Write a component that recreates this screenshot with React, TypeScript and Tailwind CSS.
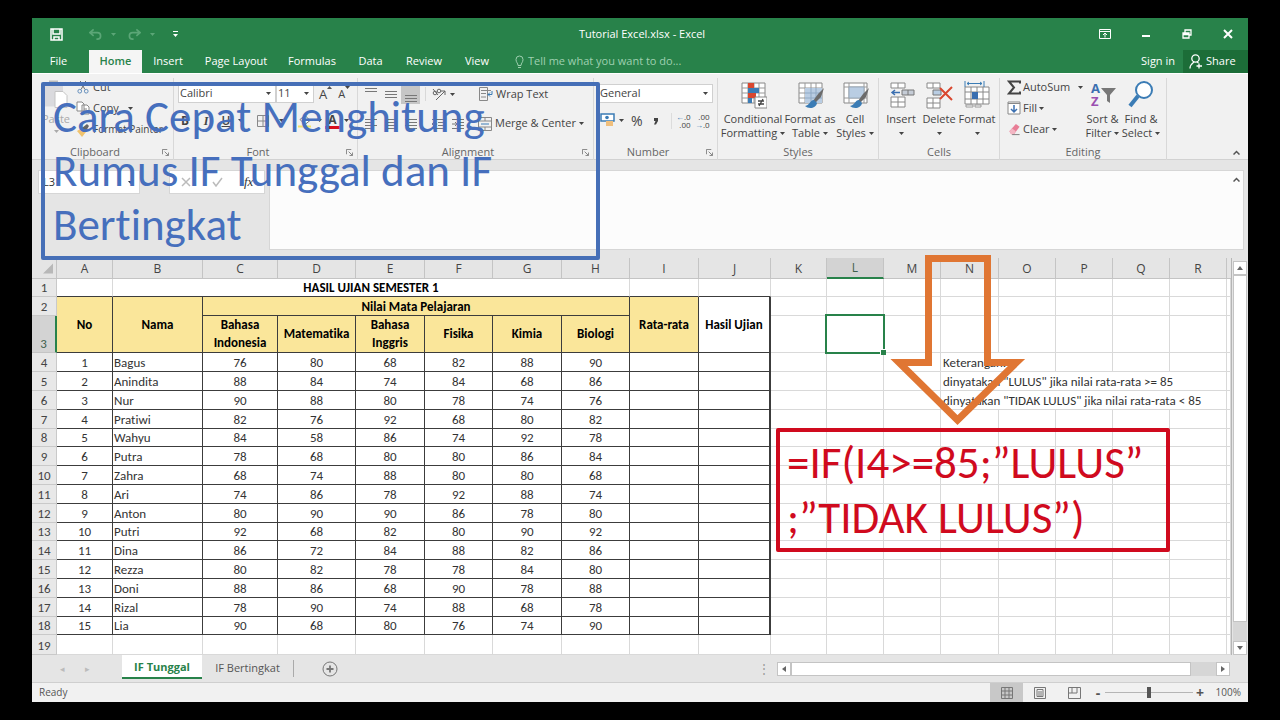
import React, { FC, ReactNode } from "react";
import { clsx } from "clsx";

const ribbonTabs = [
  { label: "File", width: "w-[57px]" },
  { label: "Home", width: "w-[53px]", active: true },
  { label: "Insert", width: "w-[52px]" },
  { label: "Page Layout", width: "w-[84px]" },
  { label: "Formulas", width: "w-[68px]" },
  { label: "Data", width: "w-[49px]" },
  { label: "Review", width: "w-[58px]" },
  { label: "View", width: "w-[48px]" },
];

const columns = [
  { name: "A", width: "w-[56px]" },
  { name: "B", width: "w-[90px]" },
  { name: "C", width: "w-[75px]" },
  { name: "D", width: "w-[78px]" },
  { name: "E", width: "w-[69px]" },
  { name: "F", width: "w-[68px]" },
  { name: "G", width: "w-[69px]" },
  { name: "H", width: "w-[68px]" },
  { name: "I", width: "w-[69px]" },
  { name: "J", width: "w-[72px]" },
  { name: "K", width: "w-[56px]" },
  { name: "L", width: "w-[57px]" },
  { name: "M", width: "w-[57px]" },
  { name: "N", width: "w-[58px]" },
  { name: "O", width: "w-[57px]" },
  { name: "P", width: "w-[57px]" },
  { name: "Q", width: "w-[57px]" },
  { name: "R", width: "w-[57px]" },
];

const students: [string, number[]][] = [
  ["Bagus", [76, 80, 68, 82, 88, 90]],
  ["Anindita", [88, 84, 74, 84, 68, 86]],
  ["Nur", [90, 88, 80, 78, 74, 76]],
  ["Pratiwi", [82, 76, 92, 68, 80, 82]],
  ["Wahyu", [84, 58, 86, 74, 92, 78]],
  ["Putra", [78, 68, 80, 80, 86, 84]],
  ["Zahra", [68, 74, 88, 80, 80, 68]],
  ["Ari", [74, 86, 78, 92, 88, 74]],
  ["Anton", [80, 90, 90, 86, 78, 80]],
  ["Putri", [92, 68, 82, 80, 90, 92]],
  ["Dina", [86, 72, 84, 88, 82, 86]],
  ["Rezza", [80, 82, 78, 78, 84, 80]],
  ["Doni", [88, 86, 68, 90, 78, 88]],
  ["Rizal", [78, 90, 74, 88, 68, 78]],
  ["Lia", [90, 68, 80, 76, 74, 90]],
];

const styles = {
  head: "border-r border-b border-[#3c3c3c] bg-[#fae69a] font-bold text-black",
  cell: "border-r border-b border-[#3c3c3c]",
  empty: "border-r border-b border-[#d9d9d9]",
};

const Caret: FC<{ className?: string }> = ({ className }) => (
  <svg viewBox="0 0 5 3" className={clsx("h-[3px] w-[5px] shrink-0", className)}>
    <path d="M0 0h5L2.5 3z" fill="currentColor" />
  </svg>
);

const Launcher = () => (
  <svg viewBox="0 0 8 8" className="h-[7px] w-[7px]" fill="none" stroke="#777">
    <path d="M.5 6V.5H6M3 3l4 4M7.500 4v3.500H4" />
  </svg>
);

type GroupProps = {
  label: string;
  width: string;
  launcher?: boolean;
  children: ReactNode;
};

const Group: FC<GroupProps> = ({ label, width, launcher, children }) => (
  <section className={clsx("flex shrink-0 flex-col", width)}>
    <div className="mt-1 flex flex-1 flex-col border-r border-[#d8d8d8] pb-1">
      <div className="h-[67px]">{children}</div>
      <div className="flex h-[14px] items-center px-1 text-[#666]">
        <span className={clsx("flex-1 text-center", launcher && "pr-2")}>{label}</span>
        {launcher && (
          <button aria-label={`${label} settings`}>
            <Launcher />
          </button>
        )}
      </div>
    </div>
  </section>
);

type BigButtonProps = {
  lines: string[];
  width: string;
  caret?: "inline" | "below";
  children: ReactNode;
};

const BigButton: FC<BigButtonProps> = ({ lines, width, caret = "inline", children }) => (
  <button className={clsx("flex shrink-0 flex-col items-center pt-px", width)}>
    <svg viewBox="0 0 28 30" className="mb-[3px] h-[30px] w-[28px]" fill="none">
      {children}
    </svg>
    {lines.map((line, i) => (
      <span key={line} className="flex h-[14px] items-center gap-[3px] whitespace-nowrap">
        {line}
        {caret === "inline" && i === lines.length - 1 && <Caret />}
      </span>
    ))}
    {caret === "below" && <Caret className="mt-[6px]" />}
  </button>
);

const Lines: FC<{ d: string }> = ({ d }) => (
  <svg viewBox="0 0 12 12" className="h-3 w-3" stroke="#777" fill="none">
    <path d={d} />
  </svg>
);

const GridLines = () => (
  <>
    <path d="M3 4h23v20H3z" fill="#fff" stroke="#888" />
    <path d="M3 9h23M3 14h23M3 19h23M9 4v20M15 4v20M20 4v20" stroke="#999" />
  </>
);

const Brush = () => (
  <>
    <path d="M28 9l-3 9-6 6-2-2 5-7z" fill="#6b6b6b" />
    <path d="M18 21c-4 0-4 5-9 6 3 3 11 3 12-3z" fill="#3b7cb5" />
  </>
);

const TitleBar = () => (
  <div className="flex h-8 items-center bg-[#28824a] text-white">
    <div className="flex flex-1 items-center pl-[18px]">
      <button aria-label="Save">
        <svg viewBox="0 0 13 13" className="h-[13px] w-[13px]" fill="none" stroke="#fff" strokeWidth="1.500">
          <path d="M1 1h11v11H1zM3 1v5h7V1M4 12V9h5v3" />
        </svg>
      </button>
      <button aria-label="Undo" className="ml-[26px] flex items-center gap-[9px] text-[#5ba677]">
        <svg viewBox="0 0 14 13" className="h-[13px] w-[13px]" fill="none" stroke="currentColor" strokeWidth="1.800">
          <path d="M5 1L1 4.500l4 3.500M1.500 4.500H9a3.500 3.500 0 0 1 0 7H8" />
        </svg>
        <Caret />
      </button>
      <button aria-label="Redo" className="ml-[12px] flex items-center gap-[9px] text-[#5ba677]">
        <svg viewBox="0 0 14 13" className="h-[13px] w-[13px]" fill="none" stroke="currentColor" strokeWidth="1.800">
          <path d="M9 1l4 3.500L9 8M12.500 4.500H5a3.500 3.500 0 0 0 0 7h1" />
        </svg>
        <Caret />
      </button>
      <button aria-label="Customize toolbar" className="ml-[18px] flex flex-col items-center gap-[2px]">
        <span className="h-px w-[5px] bg-white" />
        <Caret />
      </button>
    </div>
    <h1 className="pt-px text-[11px]">Tutorial Excel.xlsx - Excel</h1>
    <div className="flex flex-1 items-center justify-end gap-[29px] pr-[14px]">
      <button aria-label="Ribbon display options">
        <svg viewBox="0 0 12 10" className="h-[10px] w-[12px]" fill="none" stroke="#fff">
          <path d="M.5.5h11v9H.5zM.5 2.500h11M6 8.500V4M4 6l2-2 2 2" />
        </svg>
      </button>
      <button aria-label="Minimize">
        <svg viewBox="0 0 12 10" className="h-[10px] w-[12px]" stroke="#fff" strokeWidth="2">
          <path d="M2 7h8" />
        </svg>
      </button>
      <button aria-label="Restore">
        <svg viewBox="0 0 12 10" className="h-[10px] w-[12px]" fill="none" stroke="#fff" strokeWidth="1.300">
          <path d="M2 4h6v5H2zM4 4V1h6v5H8M2 5.500h6" />
        </svg>
      </button>
      <button aria-label="Close">
        <svg viewBox="0 0 12 10" className="h-[10px] w-[12px]" stroke="#fff" strokeWidth="2">
          <path d="M2 1l8 8M10 1L2 9" />
        </svg>
      </button>
    </div>
  </div>
);

const RibbonTabs = () => (
  <nav className="flex h-[23px] items-stretch bg-[#28824a] text-[11px] text-white">
    {ribbonTabs.map((tab) => (
      <button
        key={tab.label}
        className={clsx(
          "shrink-0 text-center whitespace-nowrap",
          tab.width,
          tab.label === "File" && "pr-1",
          tab.active && "bg-[#f5f5f5] font-semibold text-[#28824a]"
        )}
      >
        {tab.label}
      </button>
    ))}
    <button className="flex items-center gap-1 pl-[14px] text-[#9fd0b0]">
      <svg viewBox="0 0 9 14" className="h-[14px] w-[9px]" fill="none" stroke="currentColor">
        <path d="M3 10.500C3 8 1 7.500 1 4.500a3.500 3.500 0 0 1 7 0c0 3-2 3.500-2 6zM3 12.500h3" />
      </svg>
      Tell me what you want to do...
    </button>
    <button className="ml-auto pr-2">Sign in</button>
    <button className="flex w-[65px] items-center gap-1 bg-[#1c6d38] pl-[6px]">
      <svg viewBox="0 0 13 15" className="h-[15px] w-[13px]" fill="none" stroke="#fff" strokeWidth="1.300">
        <circle cx="6.500" cy="4.500" r="3.700" />
        <path d="M1 14.500c0-4 2-5 4-6.500M8 8l1.500 1M10 9.500v5M7.500 12H13" />
      </svg>
      Share
    </button>
  </nav>
);

const Ribbon = () => (
  <div className="flex h-[87px] border-t border-b border-t-white border-b-[#d2d2d2] bg-[#f1f1f1] text-[11px] text-[#444]">
    <Group label="Clipboard" width="w-[142px]" launcher>
      <div className="flex">
        <button className="flex w-[44px] flex-col items-center pl-1 text-[#aaa]">
          <svg viewBox="0 0 26 32" className="h-[33px] w-[26px]">
            <path d="M1 4h19v24H1z" fill="#dadade" />
            <path d="M6 2h9v4H6z" fill="#bbb" />
            <path d="M12 13h8l4 4v12H12z" fill="#fff" stroke="#c4c4c4" />
          </svg>
          <span className="h-[14px]">Paste</span>
          <Caret className="mt-[5px]" />
        </button>
        <div className="flex flex-col">
          <button className="flex h-[19px] items-center gap-[3px]">
            <svg viewBox="0 0 14 14" className="h-[13px] w-[14px]" fill="none" stroke="#666">
              <path d="M4 0l5 9M10 0L5 9" />
              <circle cx="3.500" cy="11" r="2" stroke="#5a87b8" />
              <circle cx="10.500" cy="11" r="2" stroke="#5a87b8" />
            </svg>
            Cut
          </button>
          <button className="flex h-[22px] items-center gap-[3px]">
            <svg viewBox="0 0 14 14" className="h-[14px] w-[14px]" fill="#fff" stroke="#888">
              <path d="M1 1h5l2 2v7H1zM6 4h5l2 2v7H6zM8 8h3M8 10h3" />
            </svg>
            Copy <Caret className="ml-[6px]" />
          </button>
          <button className="flex h-[21px] items-center gap-[3px] whitespace-nowrap">
            <svg viewBox="0 0 14 14" className="h-[14px] w-[14px]">
              <path d="M1 8l5-3 4 4-4 5z" fill="#f0c36d" />
              <path d="M6 5l5-4 2 2-3 5z" fill="#666" />
            </svg>
            <span className="text-[10px]">Format Painter</span>
          </button>
        </div>
      </div>
    </Group>

    <Group label="Font" width="w-[184px]" launcher>
      <div className="flex items-center pt-[6px] pl-1">
        <label className="flex h-[19px] w-[98px] items-center border border-[#d0d0d0] bg-white pr-1">
          <input aria-label="Font name" defaultValue="Calibri" className="w-full min-w-0 pl-px outline-none" />
          <Caret />
        </label>
        <label className="flex h-[19px] w-[38px] items-center border border-[#d0d0d0] bg-white pr-1">
          <input aria-label="Font size" defaultValue="11" className="w-full min-w-0 pl-px outline-none" />
          <Caret />
        </label>
        <button aria-label="Increase font size" className="ml-[5px] flex items-start text-[13px] leading-[16px]">
          A
          <svg viewBox="0 0 5 3" className="h-[3px] w-[5px]">
            <path d="M0 3h5L2.500 0z" fill="#555" />
          </svg>
        </button>
        <button aria-label="Decrease font size" className="ml-[6px] flex items-start text-[11px] leading-[16px]">
          A
          <Caret />
        </button>
      </div>
      <div className="flex h-[33px] items-center pt-[2px] text-[12px]">
        <button className="w-[22px] font-bold">B</button>
        <button className="w-[20px] font-['Liberation_Serif',serif] font-bold italic">I</button>
        <button className="w-[20px] font-semibold underline">U</button>
        <Caret className="ml-[2px]" />
        <button aria-label="Borders" className="ml-[14px]">
          <svg viewBox="0 0 12 12" className="h-3 w-3" fill="none" stroke="#888">
            <path d="M.5.5h11v11H.5zM6 0v12M0 6h12" />
          </svg>
        </button>
        <Caret className="ml-[10px]" />
        <button aria-label="Fill color" className="ml-[14px]">
          <svg viewBox="0 0 14 14" className="h-[15px] w-[14px]">
            <path d="M2 6l5-4 5 5-5 4z" fill="#fff" stroke="#777" />
            <path d="M0 12h13v2H0z" fill="#f3e36a" />
          </svg>
        </button>
        <Caret className="ml-[5px]" />
        <button aria-label="Font color" className="ml-[3px] flex w-[15px] flex-col items-center font-bold">
          <span className="leading-[13px]">A</span>
          <span className="h-[3px] w-[15px] bg-[#d80f1c]" />
        </button>
        <Caret className="ml-1" />
      </div>
    </Group>

    <Group label="Alignment" width="w-[236px]" launcher>
      <div className="flex h-[32px] items-center pl-[3px]">
        <button aria-label="Top align" className="flex h-5 w-[20px] items-start justify-center">
          <Lines d="M0 1.500h12M0 4.500h12M0 7.500h12" />
        </button>
        <button aria-label="Middle align" className="flex h-5 w-[20px] items-center justify-center">
          <Lines d="M0 3.500h12M0 6.500h12M0 9.500h12" />
        </button>
        <button aria-label="Bottom align" className="flex h-5 w-[19px] items-end justify-center bg-[#c6c6c6]">
          <Lines d="M0 3.500h12M0 6.500h12M0 9.500h12" />
        </button>
        <button aria-label="Orientation" className="ml-[5px] flex items-center gap-1 border-l border-[#d8d8d8] pl-[6px]">
          <svg viewBox="0 0 14 14" className="h-[14px] w-[14px]" fill="none" stroke="#666">
            <path d="M4 13l9-9M13 8V4H9" />
            <circle cx="3" cy="6" r="1.800" />
            <circle cx="7" cy="4" r="1.800" />
            <path d="M1 2l5 6" />
          </svg>
          <Caret />
        </button>
        <button className="ml-[24px] flex items-center gap-[3px] whitespace-nowrap">
          <svg viewBox="0 0 14 14" className="h-[14px] w-[14px]" fill="none" stroke="#888">
            <path d="M.5.5h8v13h-8zM2 3.500h10M2 6.500h5M2 10h5" />
            <path d="M13 4v3.500H9M11 5.500l-2 2 2 2" stroke="#3b7cb5" />
          </svg>
          Wrap Text
        </button>
      </div>
      <div className="flex h-[27px] items-center pl-[3px]">
        <button aria-label="Align left" className="flex w-[20px] justify-center">
          <Lines d="M0 1.500h12M0 4.500h8M0 7.500h12M0 10.500h8" />
        </button>
        <button aria-label="Center" className="flex w-[20px] justify-center">
          <Lines d="M0 1.500h12M2 4.500h8M0 7.500h12M2 10.500h8" />
        </button>
        <button aria-label="Align right" className="flex w-[19px] justify-center">
          <Lines d="M0 1.500h12M4 4.500h8M0 7.500h12M4 10.500h8" />
        </button>
        <button aria-label="Decrease indent" className="ml-[8px] flex w-[20px] justify-center">
          <Lines d="M0 1.500h12M6 4.500h6M6 7.500h6M0 10.500h12M5 6H0M2 4L0 6l2 2" />
        </button>
        <button aria-label="Increase indent" className="flex w-[20px] justify-center">
          <Lines d="M0 1.500h12M6 4.500h6M6 7.500h6M0 10.500h12M0 6h5M3 4l2 2-2 2" />
        </button>
        <button className="ml-[10px] flex items-center gap-[3px] whitespace-nowrap">
          <svg viewBox="0 0 14 14" className="h-[14px] w-[14px]" fill="none" stroke="#888">
            <path d="M.5.5h13v13H.5zM.5 4h13M.5 10h13M7 0v4M7 10v4" />
            <path d="M3 7h8" stroke="#3b7cb5" />
          </svg>
          Merge &amp; Center <Caret />
        </button>
      </div>
    </Group>

    <Group label="Number" width="w-[124px]" launcher>
      <div className="pt-[6px] pr-1 pl-[5px]">
        <label className="flex h-[19px] items-center border border-[#d0d0d0] bg-white pr-1">
          <input aria-label="Number format" defaultValue="General" className="w-full min-w-0 outline-none" />
          <Caret />
        </label>
      </div>
      <div className="flex h-[33px] items-center pt-[2px] pl-[6px]">
        <button aria-label="Accounting format" className="flex items-center gap-1">
          <svg viewBox="0 0 15 15" className="h-[15px] w-[15px]">
            <path d="M1 1h13v7H1z" fill="#fff" stroke="#3b7cb5" strokeWidth="1.500" />
            <circle cx="7" cy="4.500" r="1.800" fill="#3b7cb5" />
            <path d="M6 8h7v5H6z" fill="#f0bf7c" />
          </svg>
          <Caret />
        </button>
        <button className="ml-[7px] text-[14px]">%</button>
        <button aria-label="Comma style" className="ml-[10px]">
          <svg viewBox="0 0 6 8" className="h-[8px] w-[6px]">
            <path d="M1 1h4v3L3 7.500H1L2.500 4H1z" fill="#444" />
          </svg>
        </button>
        <button aria-label="Increase decimal" className="ml-[12px] flex w-[20px] flex-col items-end border-l border-[#dcdcdc] text-[8px] leading-[8px]">
          <span><span className="text-[#3b7cb5]">←</span>.0</span>
          <span>.00</span>
        </button>
        <button aria-label="Decrease decimal" className="ml-1 flex w-[15px] flex-col items-end text-[8px] leading-[8px]">
          <span>.00</span>
          <span><span className="text-[#3b7cb5]">→</span>.0</span>
        </button>
      </div>
    </Group>

    <Group label="Styles" width="w-[161px]">
      <div className="flex pl-[3px]">
        <BigButton lines={["Conditional", "Formatting"]} width="w-[64px]">
          <GridLines />
          <path d="M9 4h6v5H9zM9 14h8v5H9z" fill="#d9472f" />
          <path d="M9 9h11v5H9zM9 19h4v5H9z" fill="#3b7cb5" />
          <path d="M16 18h12v11H16z" fill="#fff" stroke="#888" />
          <path d="M19 22h6M19 25h6M24 20l-4 7" stroke="#444" strokeWidth="1.300" />
        </BigButton>
        <BigButton lines={["Format as", "Table"]} width="w-[50px]">
          <GridLines />
          <path d="M9 9h17v15H9z" fill="#b9cde3" />
          <path d="M9 14h17M9 19h17M15 9v15M20 9v15" stroke="#8fa9c4" />
          <Brush />
        </BigButton>
        <BigButton lines={["Cell", "Styles"]} width="w-[40px]">
          <path d="M3 4h23v20H3z" fill="#fff" stroke="#888" />
          <path d="M3 8h23M3 19h23M8 4v20M23 4v20" stroke="#999" />
          <path d="M8 8h15v11H8z" fill="#b9cde3" stroke="#9ab" />
          <Brush />
        </BigButton>
      </div>
    </Group>

    <Group label="Cells" width="w-[121px]">
      <div className="flex pl-[3px]">
        <BigButton lines={["Insert"]} width="w-[38px]" caret="below">
          <path d="M4 4h14v5H4zM11 4v5M4 18h14v10H4zM11 18v10M4 23h14" fill="#fff" stroke="#888" />
          <path d="M15 11h12v5H15zM21 11v5" fill="#c5ccd6" stroke="#777" />
          <path d="M13 13.500H5M8 11l-3 2.500L8 16" stroke="#3b6fb0" strokeWidth="1.500" />
        </BigButton>
        <BigButton lines={["Delete"]} width="w-[38px]" caret="below">
          <path d="M2 4h13v5H2zM8 4v5M2 19h13v10H2zM8 19v10M2 24h13" fill="#fff" stroke="#888" />
          <path d="M8 11h8v5H8z" fill="#b9cde3" stroke="#777" />
          <path d="M15 9l12 12M27 8L15 20" stroke="#d9472f" strokeWidth="2" />
        </BigButton>
        <BigButton lines={["Format"]} width="w-[38px]" caret="below">
          <path d="M2 8h24v17H2zM2 13h24M2 20h24M8 8v17M14 8v17M20 8v17" fill="#fff" stroke="#888" />
          <path d="M9 13h6v7H9z" fill="#3b6fb0" />
          <path d="M2 2v6M21 2v6M4 4.500h15M6 3L4 4.500 6 6M17 3l2 1.500L17 6" stroke="#3b7cb5" />
          <path d="M3 26h7v2H3zM12 26h6v2h-6z" fill="#fff" stroke="#999" />
        </BigButton>
      </div>
    </Group>

    <Group label="Editing" width="w-[167px]">
      <div className="flex pl-[7px]">
        <div className="flex w-[76px] shrink-0 flex-col">
          <button className="flex h-[19px] items-center gap-[2px]">
            <svg viewBox="0 0 14 14" className="h-[15px] w-[14px]" fill="none" stroke="#444" strokeWidth="2">
              <path d="M13 3V1H2l5 6-5 6h11v-2" />
            </svg>
            AutoSum <Caret className="ml-auto" />
          </button>
          <button className="flex h-[22px] items-center gap-[2px]">
            <svg viewBox="0 0 14 14" className="h-[14px] w-[14px]" fill="#fff" stroke="#888">
              <path d="M1 1h12v12H1zM1 2.500h12" />
              <path d="M7 4v7M4 8l3 3 3-3" fill="none" stroke="#3b6fb0" strokeWidth="1.500" />
            </svg>
            Fill <Caret />
          </button>
          <button className="flex h-[21px] items-center gap-[2px]">
            <svg viewBox="0 0 14 14" className="h-[13px] w-[14px]">
              <path d="M2 9l7-8 4 3-6 8H4z" fill="#e87d96" />
              <path d="M2 9l3-3 4 3-2 3H4z" fill="#f3b6c3" />
              <path d="M5 12.500h8" stroke="#777" />
            </svg>
            Clear <Caret />
          </button>
        </div>
        <BigButton lines={["Sort &", "Filter"]} width="w-[39px]">
          <text x="2" y="14" fontSize="13" fontWeight="700" fill="#3b6fb0">A</text>
          <text x="2" y="27" fontSize="13" fontWeight="700" fill="#9a4fb0">Z</text>
          <path d="M12 9h15l-6 7v8l-3-2v-6z" fill="#777" />
        </BigButton>
        <BigButton lines={["Find &", "Select"]} width="w-[38px]">
          <circle cx="17" cy="11" r="8" fill="#fff" stroke="#3b7cb5" strokeWidth="2" />
          <path d="M11 17L3 27" stroke="#3b7cb5" strokeWidth="4" />
        </BigButton>
      </div>
    </Group>
    <button aria-label="Collapse ribbon" className="mt-auto mr-2 mb-1 ml-auto">
      <svg viewBox="0 0 7 5" className="h-[5px] w-[7px]" fill="none" stroke="#555" strokeWidth="1.500">
        <path d="M.5 4.500l3-3 3 3" />
      </svg>
    </button>
  </div>
);

const FormulaBar = () => (
  <div className="flex items-start bg-[#e5e5e5] px-[4px] pt-[10px] pb-[8px] text-[11px] text-[#333]">
    <label className="ml-[2px] flex h-6 w-[102px] items-center border border-[#d6d6d6] bg-white pr-[6px]">
      <input aria-label="Name box" defaultValue="L3" className="w-full min-w-0 pl-1 outline-none" />
      <Caret />
    </label>
    <span className="w-[29px] text-center leading-6 text-[#999]">⋮</span>
    <div className="flex h-6 w-[96px] items-center justify-around border border-[#d6d6d6] bg-white">
      <button aria-label="Cancel">
        <svg viewBox="0 0 10 10" className="h-[10px] w-[10px]" stroke="#bbb" strokeWidth="1.500">
          <path d="M1 1l8 8M9 1L1 9" />
        </svg>
      </button>
      <button aria-label="Enter">
        <svg viewBox="0 0 11 10" className="h-[10px] w-[11px]" fill="none" stroke="#bbb" strokeWidth="1.500">
          <path d="M1 5l3 4 6-8" />
        </svg>
      </button>
      <button className="font-['Liberation_Serif',serif] text-[13px] italic">fx</button>
    </div>
    <textarea
      aria-label="Formula"
      className="ml-1 h-[80px] flex-1 resize-none border border-[#d6d6d6] bg-[#fcfcfc] outline-none"
    />
    <button aria-label="Collapse formula bar" className="-ml-4 mt-[7px] w-4">
      <svg viewBox="0 0 7 5" className="mx-auto h-[5px] w-[7px]" fill="none" stroke="#555" strokeWidth="1.500">
        <path d="M.5 4.500l3-3 3 3" />
      </svg>
    </button>
  </div>
);

const RowLabel: FC<{ row: number }> = ({ row }) => (
  <th
    scope="row"
    className={clsx(
      "border-r border-b text-center align-bottom text-[13px] leading-[17px] font-normal",
      row === 3
        ? "border-r-2 border-r-[#28824a] border-b-[#c4c4c4] bg-[#d3d3d3] text-[#3f5f4c]"
        : "border-[#c9c9c9] bg-[#e8e8e8] text-[#444]"
    )}
  >
    {row}
  </th>
);

const Blank: FC<{ count: number }> = ({ count }) => (
  <>
    {Array.from({ length: count }, (_, i) => (
      <td key={i} className={styles.empty} />
    ))}
  </>
);

const Sheet = () => (
  <table className="w-full table-fixed border-separate border-spacing-0 bg-white font-[Calibri,Carlito,Lato,sans-serif] text-[13px] leading-[17px] text-[#333] [font-variant-ligatures:none]">
    <colgroup>
      <col className="w-[25px]" />
      {columns.map((col) => (
        <col key={col.name} className={col.width} />
      ))}
      <col />
    </colgroup>
    <thead>
      <tr className="h-[21px] bg-[#e5e5e5] font-['Open_Sans',sans-serif] text-[12px] text-[#444]">
        <th className="border-r border-b border-[#c4c4c4]">
          <svg viewBox="0 0 10 10" className="mr-[3px] ml-auto h-[11px] w-[10px]">
            <path d="M10 0v10H0z" fill="#b8b8b8" />
          </svg>
        </th>
        {columns.map((col) => (
          <th
            key={col.name}
            scope="col"
            className={clsx(
              "border-r border-b font-normal",
              col.name === "L"
                ? "border-b-2 border-r-[#c4c4c4] border-b-[#28824a] bg-[#d3d3d3] text-[#3f5f4c]"
                : "border-[#c4c4c4]"
            )}
          >
            {col.name}
          </th>
        ))}
        <th className="border-b border-[#c4c4c4]" />
      </tr>
    </thead>
    <tbody>
      <tr className="h-[18px]">
        <RowLabel row={1} />
        <td className="border-r border-b border-r-[#d9d9d9] border-b-[#3c3c3c]" />
        <td colSpan={7} className="border-r border-b border-r-[#d9d9d9] border-b-[#3c3c3c] text-center font-bold text-black">
          HASIL UJIAN SEMESTER 1
        </td>
        <td className="border-r border-b border-r-[#d9d9d9] border-b-[#3c3c3c]" />
        <td className="border-r border-b border-r-[#d9d9d9] border-b-[#3c3c3c]" />
        <Blank count={9} />
      </tr>
      <tr className="h-[19px]">
        <RowLabel row={2} />
        <th rowSpan={2} className={styles.head}>No</th>
        <th rowSpan={2} className={styles.head}>Nama</th>
        <th colSpan={6} className={styles.head}>Nilai Mata Pelajaran</th>
        <th rowSpan={2} className={styles.head}>Rata-rata</th>
        <th rowSpan={2} className="border-r-2 border-b border-[#3c3c3c] font-bold text-black">Hasil Ujian</th>
        <Blank count={9} />
      </tr>
      <tr className="h-[37px] leading-[18px]">
        <RowLabel row={3} />
        <th className={styles.head}>Bahasa Indonesia</th>
        <th className={styles.head}>Matematika</th>
        <th className={styles.head}>Bahasa Inggris</th>
        <th className={styles.head}>Fisika</th>
        <th className={styles.head}>Kimia</th>
        <th className={styles.head}>Biologi</th>
        <Blank count={1} />
        <td className="relative border-r border-b border-[#d9d9d9]">
          <div className="absolute -inset-[2px] border-2 border-[#28824a]">
            <span className="absolute -right-[3px] -bottom-[3px] h-[6px] w-[6px] border-t border-l border-white bg-[#28824a]" />
          </div>
        </td>
        <Blank count={7} />
      </tr>
      {students.map(([name, scores], i) => (
        <tr key={name} className={i % 5 === 4 ? "h-[18px]" : "h-[19px]"}>
          <RowLabel row={i + 4} />
          <td className={clsx(styles.cell, "text-center")}>{i + 1}</td>
          <td className={clsx(styles.cell, "pl-px")}>{name}</td>
          {scores.map((score, j) => (
            <td key={j} className={clsx(styles.cell, "text-center")}>{score}</td>
          ))}
          <td className={styles.cell} />
          <td className="border-r-2 border-b border-[#3c3c3c]" />
          <Blank count={3} />
          {i === 0 && (
            <>
              <td colSpan={2} className={clsx(styles.empty, "pl-[2px]")}>Keterangan:</td>
              <Blank count={4} />
            </>
          )}
          {i === 1 && (
            <>
              <td colSpan={5} className={clsx(styles.empty, "pl-[2px] whitespace-nowrap")}>
                dinyatakan "LULUS" jika nilai rata-rata &gt;= 85
              </td>
              <Blank count={1} />
            </>
          )}
          {i === 2 && (
            <>
              <td colSpan={5} className={clsx(styles.empty, "pl-[2px] whitespace-nowrap")}>
                dinyatakan "TIDAK LULUS" jika nilai rata-rata &lt; 85
              </td>
              <Blank count={1} />
            </>
          )}
          {i > 2 && <Blank count={6} />}
        </tr>
      ))}
      <tr className="h-[20px]">
        <RowLabel row={19} />
        <Blank count={19} />
      </tr>
    </tbody>
  </table>
);

const ScrollArrow: FC<{ label: string; d: string }> = ({ label, d }) => (
  <button
    aria-label={label}
    className="flex h-[14px] w-[14px] shrink-0 items-center justify-center border border-[#c4c4c4] bg-white"
  >
    <svg viewBox="0 0 6 6" className="h-[6px] w-[6px]">
      <path d={d} fill="#666" />
    </svg>
  </button>
);

const SheetTabs = () => (
  <div className="flex h-7 items-stretch border-b border-[#cfcfcf] bg-[#e5e5e5] text-[12px] text-[#555]">
    <div className="flex w-[90px] items-center justify-center gap-[20px] pr-1 text-[9px] text-[#bbb]">
      <button aria-label="Previous sheet">◂</button>
      <button aria-label="Next sheet">▸</button>
    </div>
    <button className="mb-[3px] w-[80px] border-b-2 border-[#28824a] bg-white pt-[3px] text-[11px] font-bold whitespace-nowrap text-[#28824a]">
      IF Tunggal
    </button>
    <button className="w-[91px] text-[11px] whitespace-nowrap">IF Bertingkat</button>
    <span className="my-[5px] w-px bg-[#aaa]" />
    <button aria-label="New sheet" className="ml-[28px]">
      <svg viewBox="0 0 16 16" className="h-4 w-4" fill="none" stroke="#777">
        <circle cx="8" cy="8" r="7" />
        <path d="M8 4.500v7M4.500 8h7" strokeWidth="1.800" />
      </svg>
    </button>
    <div className="ml-auto flex w-[40%] items-center pr-[18px]">
      <span className="-ml-1 w-[19px] text-[#999]">⋮</span>
      <ScrollArrow label="Scroll left" d="M5 0v6L1 3z" />
      <div className="flex h-[14px] flex-1 bg-[#d6d6d6]">
        <div className="mr-[25px] flex-1 border border-[#c4c4c4] bg-white" />
      </div>
      <ScrollArrow label="Scroll right" d="M1 0v6l4-3z" />
    </div>
  </div>
);

const StatusBar = () => (
  <div className="flex h-[19px] items-center bg-[#f1f1f1] pr-[7px] text-[10px] text-[#555]">
    <span className="flex-1 pl-[7px]">Ready</span>
    <button aria-label="Normal view" className="flex h-full w-[33px] items-center justify-center bg-[#c8c8c8]">
      <svg viewBox="0 0 12 12" className="h-3 w-3" fill="none" stroke="#777">
        <path d="M.5.5h11v11H.5zM4 0v12M8 0v12M0 4h12M0 8h12" />
      </svg>
    </button>
    <button aria-label="Page layout view" className="flex w-[34px] justify-center">
      <svg viewBox="0 0 12 12" className="h-3 w-3" fill="none" stroke="#777">
        <path d="M.5.5h11v11H.5zM3 2.500h6v7H3zM5 4v5M7 4v5" />
      </svg>
    </button>
    <button aria-label="Page break view" className="flex w-[34px] justify-center">
      <svg viewBox="0 0 13 12" className="h-3 w-[13px]" fill="none" stroke="#777">
        <path d="M.5.5h12v11H.5zM4 0v6h5V0M0 6h4" />
      </svg>
    </button>
    <button aria-label="Zoom out" className="w-[14px] text-[14px] leading-[14px] font-bold">-</button>
    <input
      type="range"
      aria-label="Zoom"
      defaultValue={50}
      className="h-[14px] w-[88px] appearance-none bg-[linear-gradient(#b5b5b5,#b5b5b5)] bg-[length:100%_1px] bg-center bg-no-repeat [&::-webkit-slider-thumb]:h-[11px] [&::-webkit-slider-thumb]:w-[4px] [&::-webkit-slider-thumb]:appearance-none [&::-webkit-slider-thumb]:bg-[#555]"
    />
    <button aria-label="Zoom in" className="w-[14px] text-[14px] leading-[14px] font-bold">+</button>
    <span className="w-[34px] text-right">100%</span>
  </div>
);

// Notes laid over the workbook: title, arrow and formula
const Annotations = () => (
  <>
    <div className="absolute top-[64px] left-[9px] h-[178px] w-[559px] rounded-[2px] border-4 border-[#466fb7] pt-[4px] pl-[8px] font-[Calibri,Carlito,Lato,sans-serif] text-[45px] leading-[54px] whitespace-nowrap text-[#466fbd] [font-variant-ligatures:none]">
      Cara Cepat Menghitung
      <br />
      Rumus IF Tunggal dan IF
      <br />
      Bertingkat
    </div>
    <svg viewBox="0 0 136 174" className="absolute top-[236px] left-[858px] h-[174px] w-[136px]">
      <path
        d="M38.500 4.500h59v104h29L67.500 166 9 108.500h29.500z"
        fill="none"
        stroke="#e07633"
        strokeWidth="7"
        strokeMiterlimit="10"
      />
    </svg>
    <div className="absolute top-[410px] left-[744px] h-[124px] w-[394px] rounded-[2px] border-4 border-[#d00a1e] pt-[3px] pl-[7px] font-[Calibri,Carlito,Lato,sans-serif] text-[45px] leading-[55px] whitespace-nowrap text-[#d00a1e] [font-variant-ligatures:none]">
      =IF(I4&gt;=85;”LULUS”
      <br />
      ;”TIDAK LULUS”)
    </div>
  </>
);

const App = () => {
  return (
    <div className="min-h-screen bg-black px-8 py-[18px] font-['Open_Sans','Noto_Sans',sans-serif]">
      <div className="relative flex flex-col overflow-hidden bg-[#e5e5e5]">
        <TitleBar />
        <RibbonTabs />
        <Ribbon />
        <FormulaBar />
        <div className="flex">
          <div className="min-w-0 flex-1">
            <Sheet />
          </div>
          <div className="flex w-[17px] flex-col items-center border-l border-[#b5b5b5] pt-[3px]">
            <ScrollArrow label="Scroll up" d="M0 5h6L3 1z" />
            <div className="flex w-[14px] flex-1 flex-col bg-[#d6d6d6]">
              <div className="mb-[19px] flex-1 border border-[#c4c4c4] bg-white" />
            </div>
            <ScrollArrow label="Scroll down" d="M0 1h6L3 5z" />
          </div>
        </div>
        <SheetTabs />
        <StatusBar />
        <Annotations />
      </div>
    </div>
  );
};

export default App;
